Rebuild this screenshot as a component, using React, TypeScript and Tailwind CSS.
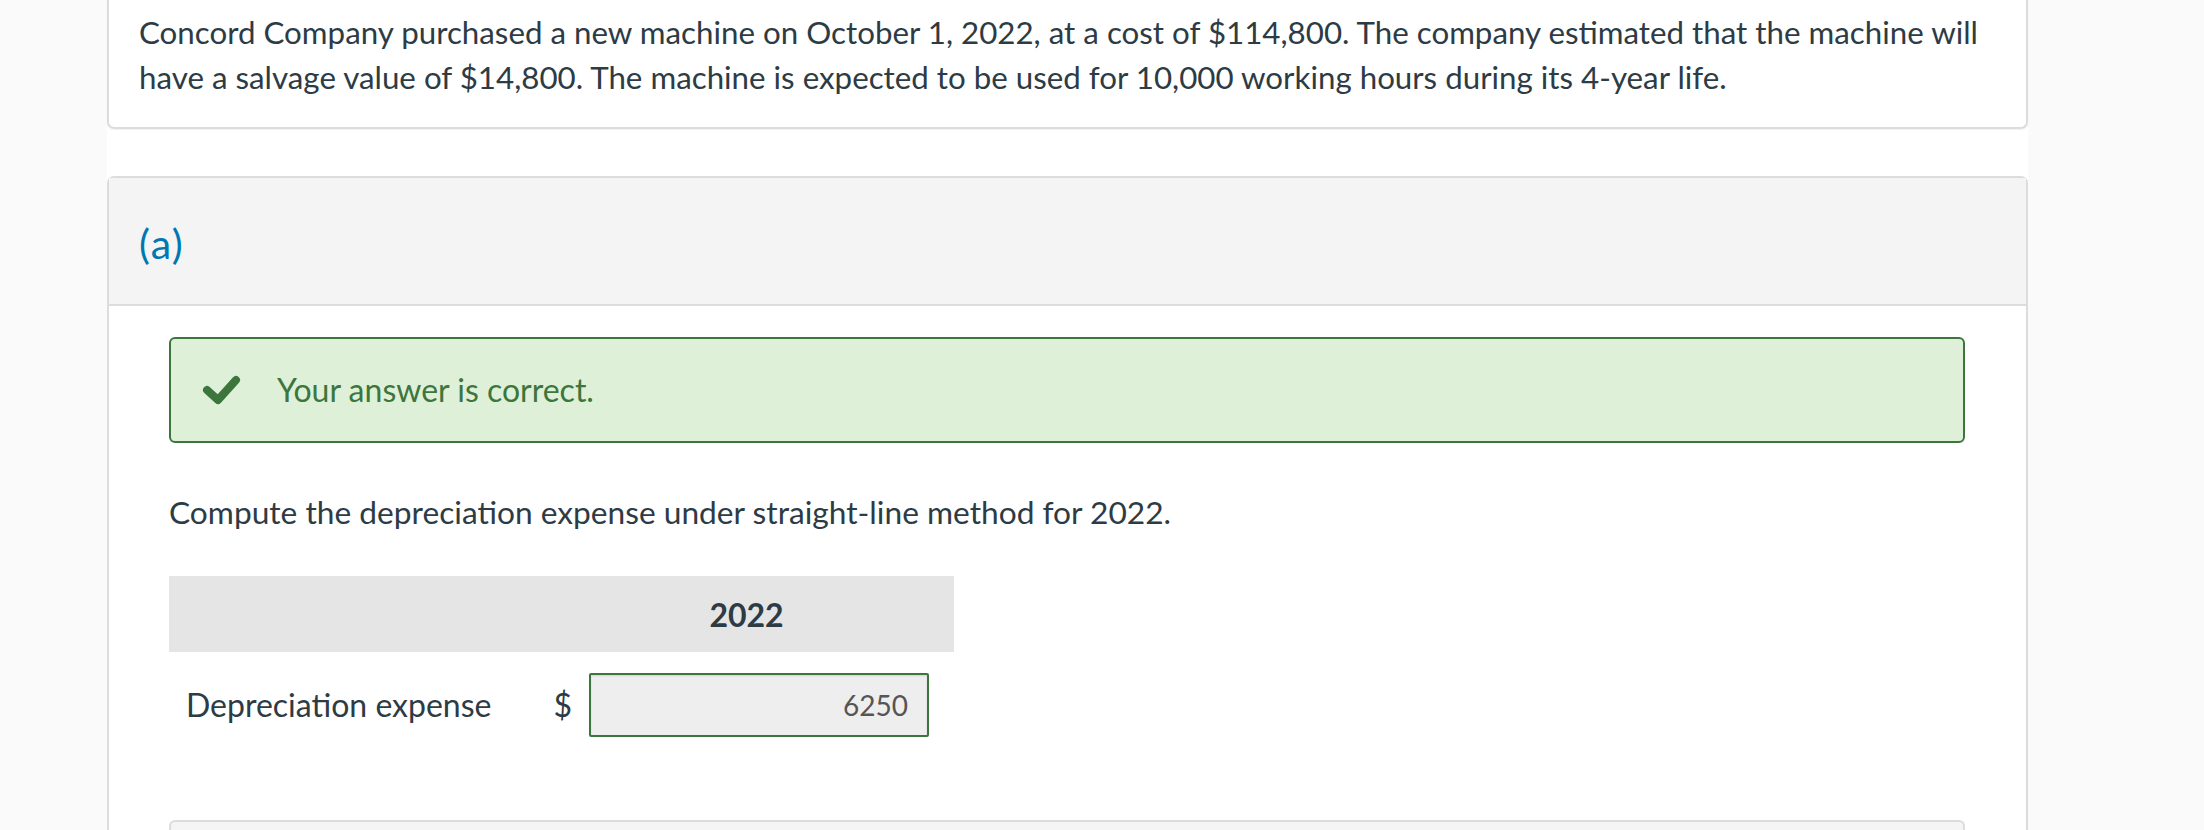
import React from "react";

function Check() {
  return (
    <svg width="40" height="32" viewBox="0 0 40 32" className="shrink-0">
      <polyline
        points="5,16 16,26 34,6"
        fill="none"
        stroke="#3c763d"
        strokeWidth="8"
        strokeLinecap="round"
        strokeLinejoin="round"
      />
    </svg>
  );
}

export default function App() {
  return (
    <div className="w-[2204px] h-[830px] overflow-hidden bg-[#fafafa] font-['Lato',sans-serif] text-[#2d3b45]">
      <div className="ml-[107px] w-[1921px] h-full bg-white flex flex-col">
        {/* Card 1 */}
        <div className="border-x-2 border-b-2 border-[#dcdcdc] rounded-b-[7px] pt-[10px] pb-[27px] pl-[30px] pr-[8px] text-[31.3px] leading-[45px] shadow-[0_1px_2px_rgba(0,0,0,0.06)]">
          Concord Company purchased a new machine on October 1, 2022, at a cost of $114,800. The company estimated that the machine will have a salvage value of $14,800. The machine is expected to be used for 10,000 working hours during its 4-year life.
        </div>

        {/* Card 2 */}
        <div className="mt-[47px] border-x-2 border-t-2 border-[#dcdcdc] rounded-t-[7px] flex-1 flex flex-col">
          <div className="h-[128px] bg-[#f4f4f4] border-b-2 border-[#dcdcdc] flex items-center px-[30px]">
            <span className="text-[41px] tracking-[1.5px] text-[#0077b3] leading-none mt-[4px]">(a)</span>
          </div>
          <div className="pt-[31px] pl-[60px] pr-[61px] flex flex-col">
            <div className="h-[106px] bg-[#dff0d8] border-2 border-[#3c763d] rounded-[6px] flex items-center pl-[31px]">
              <Check />
              <span className="ml-[35px] text-[32px] text-[#3c763d]">Your answer is correct.</span>
            </div>

            <div className="mt-[47px] text-[31.7px] leading-[45px]">
              Compute the depreciation expense under straight-line method for 2022.
            </div>

            <div className="mt-[41px] w-[785px]">
              <div className="h-[76px] bg-[#e5e5e5] grid grid-cols-[370px_415px] items-center">
                <div></div>
                <div className="text-center font-bold text-[32px] pt-[2px]">2022</div>
              </div>
              <div className="mt-[21px] grid grid-cols-[370px_50px_340px_25px] items-center">
                <div className="pl-[17px] text-[32px]">Depreciation expense</div>
                <div className="text-[32px] text-right pr-[17px]">$</div>
                <div className="h-[64px] bg-[#eeeeee] border-2 border-[#3c763d] rounded-[2px] shadow-[inset_0_1px_2px_rgba(0,0,0,0.12)] flex items-center justify-end pr-[19px] text-[28px] text-[#555555]">
                  6250
                </div>
                <div></div>
              </div>
            </div>

            <div className="mt-[83px] h-[40px] bg-[#f5f5f5] border-x-2 border-t-2 border-[#dcdcdc] rounded-t-[6px]"></div>
          </div>
        </div>
      </div>
    </div>
  );
}
